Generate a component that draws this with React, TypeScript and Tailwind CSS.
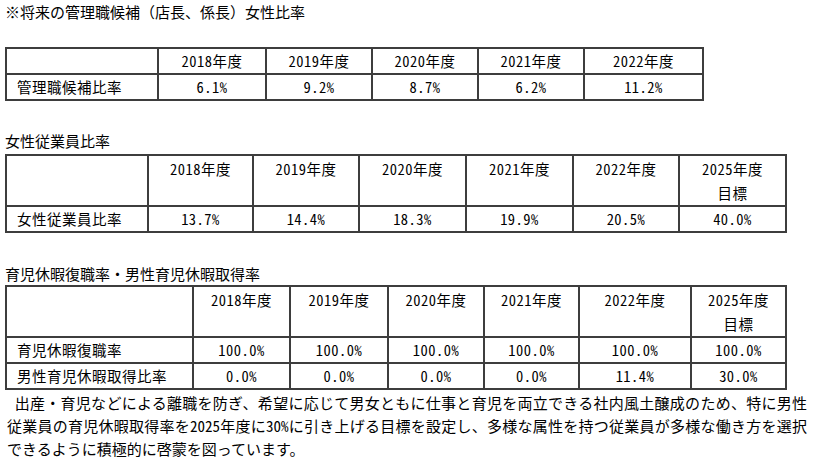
const font = {
  fontFamily: '"Noto Sans CJK JP", "Noto Sans CJK SC", sans-serif',
};

type Row = { label: string; values: string[] };

function DataTable({
  widths,
  years,
  rows,
  goal,
  tableWidth,
}: {
  widths: string[];
  years: string[];
  rows: Row[];
  goal?: boolean;
  tableWidth: string;
}) {
  return (
    <table
      className={`table-fixed border-collapse text-[14.5px] text-black [font-feature-settings:'hwid'] ${tableWidth}`}
    >
      <colgroup>
        {widths.map((w, i) => (
          <col key={i} className={w} />
        ))}
      </colgroup>
      <thead>
        <tr>
          <th className="border-2 border-[#3d3d3d] p-0" />
          {years.map((y, i) => (
            <th
              key={y}
              className={
                goal
                  ? "border-2 border-[#3d3d3d] p-0 pt-[1px] align-top font-normal leading-[24px] h-[49px] tracking-[0.5px]"
                  : "border-2 border-[#3d3d3d] p-0 font-normal leading-[24px] h-[24px] tracking-[0.5px]"
              }
            >
              {y}
              {goal && i === years.length - 1 && (
                <>
                  <br />
                  目標
                </>
              )}
            </th>
          ))}
        </tr>
      </thead>
      <tbody>
        {rows.map((r) => (
          <tr key={r.label}>
            <td className="border-2 border-[#3d3d3d] p-0 pl-[10px] leading-[24px] h-[24px] tracking-[0.5px]">
              {r.label}
            </td>
            {r.values.map((v, i) => (
              <td key={i} className="border-2 border-[#3d3d3d] p-0 text-center leading-[24px] h-[24px] tracking-[0.5px]">
                {v}
              </td>
            ))}
          </tr>
        ))}
      </tbody>
    </table>
  );
}

export default function App() {
  return (
    <div className="w-[820px] h-[470px] overflow-hidden bg-white pl-[5px] text-black" style={font}>
      <p className="pt-[1px] text-[15px] leading-[22px]">※将来の管理職候補（店長、係長）女性比率</p>

      <div className="mt-[24px]">
        <DataTable
          tableWidth="w-[697px]"
          widths={["w-[152px]", "w-[108px]", "w-[106px]", "w-[106px]", "w-[106px]", "w-[119px]"]}
          years={["2018年度", "2019年度", "2020年度", "2021年度", "2022年度"]}
          rows={[{ label: "管理職候補比率", values: ["6.1%", "9.2%", "8.7%", "6.2%", "11.2%"] }]}
        />
      </div>

      <p className="mt-[29px] text-[15px] leading-[22px]">女性従業員比率</p>
      <div className="mt-[2px]">
        <DataTable
          goal
          tableWidth="w-[780px]"
          widths={["w-[142px]", "w-[105px]", "w-[106px]", "w-[107px]", "w-[107px]", "w-[106px]", "w-[107px]"]}
          years={["2018年度", "2019年度", "2020年度", "2021年度", "2022年度", "2025年度"]}
          rows={[{ label: "女性従業員比率", values: ["13.7%", "14.4%", "18.3%", "19.9%", "20.5%", "40.0%"] }]}
        />
      </div>

      <p className="mt-[30px] text-[15px] leading-[22px]">育児休暇復職率・男性育児休暇取得率</p>
      <DataTable
        goal
        tableWidth="w-[780px]"
        widths={["w-[187px]", "w-[97px]", "w-[98px]", "w-[96px]", "w-[95px]", "w-[112px]", "w-[95px]"]}
        years={["2018年度", "2019年度", "2020年度", "2021年度", "2022年度", "2025年度"]}
        rows={[
          { label: "育児休暇復職率", values: ["100.0%", "100.0%", "100.0%", "100.0%", "100.0%", "100.0%"] },
          { label: "男性育児休暇取得比率", values: ["0.0%", "0.0%", "0.0%", "0.0%", "11.4%", "30.0%"] },
        ]}
      />

      <div className="mt-[1px] w-[802px] pl-[2px] text-[15px] leading-[23px] [font-feature-settings:'hwid']">
        <p className="text-justify [text-align-last:justify]">
          {"\u3000出産・育児などによる離職を防ぎ、希望に応じて男女ともに仕事と育児を両立できる社内風土醸成のため、特に男性"}
        </p>
        <p className="text-justify [text-align-last:justify]">
          従業員の育児休暇取得率を2025年度に30%に引き上げる目標を設定し、多様な属性を持つ従業員が多様な働き方を選択
        </p>
        <p>できるように積極的に啓蒙を図っています。</p>
      </div>
    </div>
  );
}
